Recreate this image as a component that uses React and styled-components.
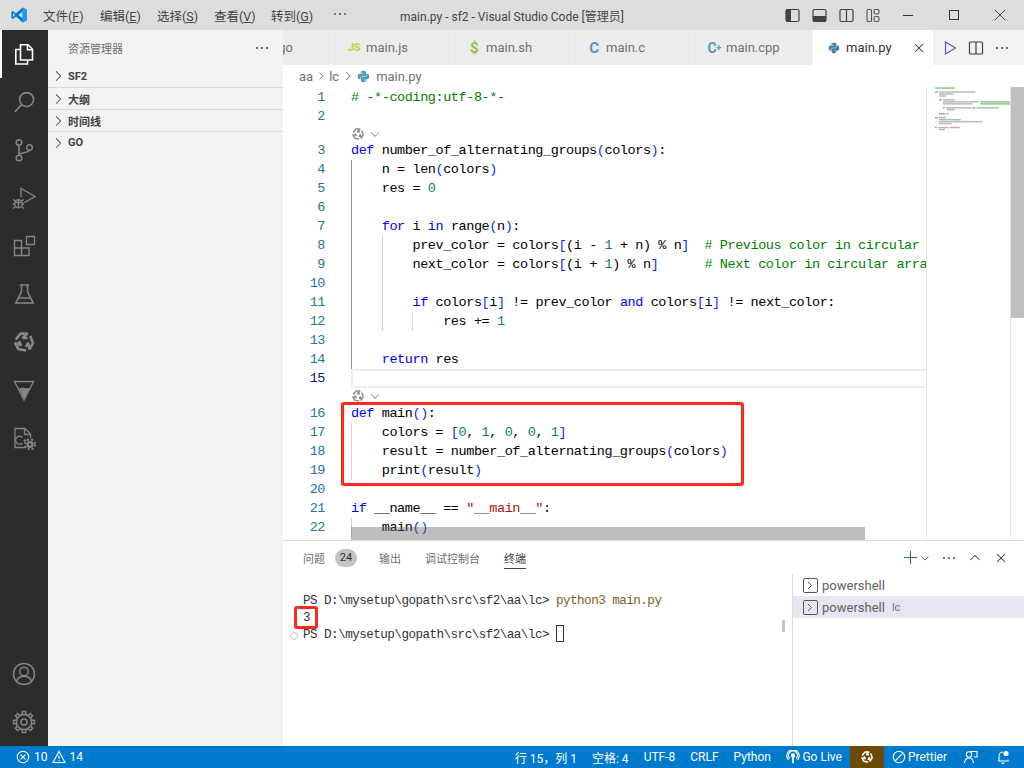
import React from 'react'
import styled, { createGlobalStyle } from 'styled-components'
import { FaPython } from 'react-icons/fa'
import { VscChevronRight, VscChevronDown, VscChevronUp, VscClose, VscEllipsis, VscAdd } from 'react-icons/vsc'

const UI = `Roboto, "Noto Sans CJK SC", sans-serif`
const MONO = `"Liberation Mono", "Noto Sans CJK SC", monospace`

const Global = createGlobalStyle`
  html, body { margin: 0; padding: 0; height: 100%; overflow: hidden; }
  #root { height: 100%; }
  * { box-sizing: border-box; }
`

const Window = styled.div`
  width: 1024px;
  height: 768px;
  display: flex;
  flex-direction: column;
  font-family: ${UI};
  overflow: hidden;
  background: #fff;
`

/* ---------- title bar ---------- */
const TitleBar = styled.div`
  height: 30px;
  flex: none;
  background: #dddddd;
  display: flex;
  align-items: center;
  position: relative;
  color: #333;
  font-size: 12.5px;
`
const Logo = styled.div`
  width: 36px;
  display: flex;
  justify-content: center;
  padding-left: 1px;
`
const Menu = styled.div`
  display: flex;
  margin-left: 7px;
  gap: 16px;
  color: #444;
`
const MenuItem = styled.span`
  white-space: nowrap;
  width: 41px;
  u { text-underline-offset: 1px; }
`
const MenuMore = styled.span`
  margin-left: 4px;
  display: flex;
  color: #555;
`
const Title = styled.div`
  position: absolute;
  left: 0;
  right: 0;
  text-align: center;
  font-size: 12px;
  color: #444;
  pointer-events: none;
`
const TitleRight = styled.div`
  margin-left: auto;
  display: flex;
  align-items: center;
  padding-right: 19px;
`
const LayoutBtn = styled.span`
  display: flex;
  margin-right: 12px;
`
const WinBtn = styled.span`
  display: flex;
  margin-left: ${p => p.$gap}px;
`

/* ---------- body ---------- */
const Body = styled.div`
  flex: 1;
  display: flex;
  min-height: 0;
`
const ActivityBar = styled.div`
  width: 48px;
  flex: none;
  background: #2c2c2c;
  display: flex;
  flex-direction: column;
  color: #858585;
`
const ActivityItem = styled.div`
  height: 48px;
  flex: none;
  display: flex;
  align-items: center;
  justify-content: center;
  color: ${p => (p.$active ? '#fff' : 'inherit')};
  border-left: ${p => (p.$active ? '2px solid #fff' : 'none')};
  padding-right: ${p => (p.$active ? '2px' : '0')};
`
const ActivitySpacer = styled.div`
  flex: 1;
`

const SideBar = styled.div`
  width: 235px;
  flex: none;
  background: #f3f3f3;
  display: flex;
  flex-direction: column;
`
const SideHead = styled.div`
  height: 35px;
  flex: none;
  display: flex;
  align-items: center;
  justify-content: space-between;
  padding: 1px 13px 0 20px;
  font-size: 11px;
  color: #6f6f6f;
`
const SideSection = styled.div`
  height: 22px;
  flex: none;
  display: flex;
  align-items: center;
  color: #424242;
  font-size: 11px;
  font-weight: 700;
  padding-left: 2px;
  gap: 2px;
  border-top: ${p => (p.$first ? 'none' : '1px solid #d9d9d9')};
`

const Main = styled.div`
  flex: 1;
  min-width: 0;
  display: flex;
  flex-direction: column;
`

/* ---------- tabs ---------- */
const TabRow = styled.div`
  height: 35px;
  flex: none;
  display: flex;
  background: #f3f3f3;
`
const TabStrip = styled.div`
  width: 650px;
  display: flex;
  justify-content: flex-end;
  overflow: hidden;
`
const Tab = styled.div`
  width: 120px;
  flex: none;
  display: flex;
  align-items: center;
  padding-left: 15px;
  gap: 6px;
  font-size: 13px;
  background: ${p => (p.$active ? '#fff' : '#ececec')};
  color: ${p => (p.$active ? '#333' : '#717171')};
  border-right: ${p => (p.$active ? 'none' : '1px solid #f3f3f3')};
`
const TabGlyph = styled.span`
  width: 12px;
  font-weight: 700;
  font-size: ${p => p.$size || 13}px;
  color: ${p => p.$color};
  display: flex;
  align-items: center;
  justify-content: center;
  letter-spacing: -0.5px;
  small { font-size: 9px; }
`
const TabClose = styled.span`
  margin-left: auto;
  margin-right: 6px;
  display: flex;
  color: #424242;
`
const TabActions = styled.div`
  flex: 1;
  display: flex;
  align-items: center;
  padding-left: 9px;
  gap: 10px;
  color: #424242;
`

const Crumbs = styled.div`
  height: 22px;
  flex: none;
  display: flex;
  align-items: center;
  padding-left: 16px;
  font-size: 13px;
  color: #717171;
  gap: 2px;
  svg:last-of-type { margin-right: 4px; }
`

/* ---------- editor ---------- */
const Editor = styled.div`
  flex: 1;
  min-height: 0;
  display: flex;
  position: relative;
  overflow: hidden;
`
const Code = styled.div`
  width: 643px;
  flex: none;
  overflow: hidden;
  padding-top: 1px;
  font-family: ${MONO};
  font-size: 13.5px;
  letter-spacing: -0.42px;
  color: #000;
`
const Row = styled.div`
  height: 19px;
  display: flex;
  align-items: center;
  white-space: pre;
  position: relative;
`
const LineNo = styled.span`
  width: 68px;
  flex: none;
  padding-right: 26px;
  text-align: right;
  color: ${p => (p.$active ? '#0b216f' : '#237893')};
`
const guideColor = (i, lit) => (i === 0 && lit ? '#939393' : '#d3d3d3')
const Text = styled.span`
  flex: 1;
  height: 100%;
  line-height: 19px;
  background-image: ${p =>
    Array.from({ length: p.$guides || 0 })
      .map((_, i) => `linear-gradient(${guideColor(i, p.$lit)}, ${guideColor(i, p.$lit)})`)
      .join(',') || 'none'};
  background-size: 1px 100%;
  background-repeat: no-repeat;
  background-position: ${p =>
    Array.from({ length: p.$guides || 0 })
      .map((_, i) => `${i * 30.72}px 0`)
      .join(',') || '0 0'};
`
const ActiveLine = styled.span`
  flex: 1;
  height: 100%;
  border: 2px solid #eeeeee;
  border-right: none;
`
const Lens = styled.div`
  height: ${p => p.$h}px;
  padding-left: 68px;
  display: flex;
  align-items: center;
  gap: 3px;
  color: #919191;
`
const Kw = styled.span`color: #0000ff;`
const Num = styled.span`color: #098658;`
const Str = styled.span`color: #a31515;`
const Cm = styled.span`color: #008000;`
const Br = styled.span`color: #0431fa;`

const Minimap = styled.div`
  width: 84px;
  flex: none;
  border-left: 1px solid #e8e8e8;
  display: flex;
  padding-left: 8px;
  overflow: hidden;
`
const EditorScroll = styled.div`
  flex: 1;
  border-left: 1px solid #e8e8e8;
`
const ScrollThumb = styled.div`
  height: 231px;
  background: #bfbfbf;
`
const HScroll = styled.div`
  position: absolute;
  left: 68px;
  bottom: 0;
  width: 514px;
  height: 13px;
  background: rgba(100, 100, 100, 0.42);
`
const RedBox = styled.div`
  position: absolute;
  border: 3px solid #ff2a1f;
  border-radius: 3px;
  pointer-events: none;
  z-index: 2;
`
const EditorRed = styled(RedBox)`
  left: 58px;
  top: 315px;
  width: 403px;
  height: 84px;
`
const TermRed = styled(RedBox)`
  left: 11px;
  top: 32px;
  width: 24px;
  height: 23px;
`

/* ---------- panel ---------- */
const Panel = styled.div`
  height: 206px;
  flex: none;
  border-top: 1px solid #dcdcdc;
  display: flex;
  flex-direction: column;
`
const PanelHead = styled.div`
  height: 33px;
  flex: none;
  display: flex;
  align-items: center;
  padding-left: 20px;
  font-size: 11px;
  color: #6f6f6f;
`
const PanelTab = styled.span`
  margin-right: ${p => p.$gap}px;
  height: 22px;
  display: flex;
  align-items: center;
  padding-top: 1px;
  color: ${p => (p.$active ? '#424242' : '#6f6f6f')};
  border-bottom: ${p => (p.$active ? '1px solid #424242' : '1px solid transparent')};
`
const Badge = styled.span`
  width: 22px;
  height: 18px;
  border-radius: 9px;
  background: #c4c4c4;
  color: #333;
  display: flex;
  align-items: center;
  justify-content: center;
  margin-left: 10px;
  margin-right: 22px;
`
const PanelActions = styled.div`
  margin-left: auto;
  display: flex;
  align-items: center;
  color: #424242;
  padding-right: 15px;
`
const PanelAction = styled.span`
  display: flex;
  margin-left: ${p => p.$gap}px;
  color: ${p => p.$color || 'inherit'};
`
const PanelBody = styled.div`
  flex: 1;
  display: flex;
  min-height: 0;
`
const Terminal = styled.div`
  width: 509px;
  flex: none;
  position: relative;
  padding: 19px 0 0 20px;
  font-family: ${MONO};
  font-size: 12.6px;
  letter-spacing: -0.53px;
  color: #333;
`
const TermLine = styled.div`
  height: 17px;
  line-height: 17px;
  white-space: pre;
  position: relative;
`
const Cmd = styled.span`color: #795e26;`
const Cursor = styled.span`
  display: inline-block;
  width: 8px;
  height: 17px;
  border: 1px solid #333;
  vertical-align: top;
  position: relative;
  top: -2px;
`
const Deco = styled.span`
  position: absolute;
  left: -13px;
  top: 5px;
  width: 8px;
  height: 8px;
  border: 1px solid #c4c4c4;
  border-radius: 50%;
`
const TermScroll = styled.div`
  position: absolute;
  right: 7px;
  top: 46px;
  width: 3px;
  height: 12px;
  background: #c4c4c4;
`
const TermList = styled.div`
  flex: 1;
  border-left: 1px solid #dcdcdc;
`
const TermItem = styled.div`
  height: 22px;
  display: flex;
  align-items: center;
  padding-left: 10px;
  gap: 4px;
  font-size: 13px;
  color: #616161;
  background: ${p => (p.$selected ? '#e4e6f1' : 'transparent')};
`
const TermFolder = styled.span`
  font-size: 11px;
  margin-left: 3px;
  color: #717171;
`

/* ---------- status bar ---------- */
const StatusBar = styled.div`
  height: 22px;
  flex: none;
  background: #007acc;
  color: #fff;
  display: flex;
  align-items: center;
  font-size: 12px;
`
const StatusLeft = styled.div`
  display: flex;
  align-items: center;
  padding-left: 16px;
  gap: 4px;
`
const StatusRight = styled.div`
  margin-left: auto;
  display: flex;
  align-items: center;
  height: 100%;
  padding-right: 5px;
`
const StatusItem = styled.span`
  display: flex;
  align-items: center;
  gap: 2px;
  height: 100%;
  padding: 0 ${p => p.$pad ?? 7.5}px;
  background: ${p => p.$bg || 'transparent'};
  white-space: nowrap;
`

/* ---------- icons ---------- */
const Svg = ({ s = 24, w, h, vb, children, fill = 'none', sw = 1.4 }) => (
  <svg width={w || s} height={h || s} viewBox={vb || `0 0 ${s} ${s}`} fill={fill} stroke="currentColor" strokeWidth={sw}>
    {children}
  </svg>
)

const VsLogo = () => (
  <svg width="16" height="16" viewBox="0 0 16 16">
    <path d="M11.6 0.6 L15.6 2.4 V13.6 L11.6 15.4 L5 9.6 L2 12 L0.4 11.2 V4.8 L2 4 L5 6.4 Z M11.6 4.8 L7.4 8 L11.6 11.2 Z M2 6 V10 L4 8 Z" fill="#007acc" fillRule="evenodd" />
    <path d="M11.6 0.6 L15.6 2.4 V13.6 L11.6 15.4 Z M11.6 4.8 V11.2 Z" fill="#1f9cf0" />
  </svg>
)
const LayoutIcon = ({ fillRect }) => (
  <svg width="15" height="15" viewBox="0 0 15 15" fill="none" stroke="#424242" strokeWidth="1.2">
    <rect x="1" y="1.5" width="13" height="12" rx="1.5" />
    {fillRect && <rect {...fillRect} fill="#424242" stroke="none" />}
    {!fillRect && <path d="M7.5 1.5 V13.5" />}
  </svg>
)
const CustomizeLayout = () => (
  <svg width="14" height="15" viewBox="0 0 14 15" fill="none" stroke="#555" strokeWidth="1.1">
    <rect x="1" y="1.5" width="4.5" height="12" rx="1" />
    <rect x="8" y="1.5" width="5" height="4.5" rx="1.5" />
    <rect x="8" y="8.5" width="5" height="5" rx="1.5" />
  </svg>
)
const FilesIcon = () => (
  <Svg sw={1.6}>
    <path d="M8.5 2.8 H16 L20.5 7.3 V18 H8.5 Z" />
    <path d="M15.5 3 V7.8 H20.3" />
    <path d="M8.5 7.5 H3.8 V22 H15.5 V18" />
  </Svg>
)
const SearchIcon = () => (
  <Svg sw={1.6}>
    <circle cx="14.6" cy="9.6" r="7" />
    <path d="M9.6 14.6 L2.8 22" />
  </Svg>
)
const ScmIcon = () => (
  <Svg sw={1.5}>
    <circle cx="7" cy="4.5" r="2.8" />
    <circle cx="17.5" cy="9.5" r="2.8" />
    <circle cx="7" cy="20" r="2.8" />
    <path d="M7 7.3 V17.2 M17.5 12.3 C17.5 15 8 14 7 17" />
  </Svg>
)
const DebugIcon = () => (
  <Svg sw={1.4}>
    <path d="M9 11 V2.5 L23 10.5 L12.5 16.5" />
    <ellipse cx="6.5" cy="17.8" rx="3.8" ry="4" />
    <path d="M3 16.5 H10 M6.5 14 V21.8 M1 13.5 L3.5 15 M12 13.5 L9.5 15 M0.8 18 H2.8 M10.2 18 H12.2 M1 22.5 L3.5 20.5 M12 22.5 L9.5 20.5" />
  </Svg>
)
const ExtIcon = () => (
  <Svg sw={1.4}>
    <path d="M2.5 6.5 H9.5 V21.5 H2.5 Z M2.5 14 H17 V21.5 H9.5 M9.5 14 V6.5" />
    <rect x="14.5" y="2.5" width="8" height="8" rx="0.5" />
  </Svg>
)
const FlaskIcon = () => (
  <Svg sw={1.5}>
    <path d="M8 3 H17 M9.5 3 V9.5 L3.8 21 H21.2 L15.5 9.5 V3" />
    <path d="M6.5 16 H18.5" />
  </Svg>
)
// twisted hexagon mark: one band repeated three times around the centre
const HexKnot = ({ size = 24, color = 'currentColor' }) => (
  <svg width={size} height={size} viewBox="0 0 24 24" fill="none" stroke={color} strokeWidth="2.6" strokeLinejoin="bevel">
    {[0, 120, 240].map(a => (
      <path key={a} transform={`rotate(${a} 12 12)`} d="M3.6 9.6 L8.6 3.6 H15.6 L10.6 8 H15.4" />
    ))}
  </svg>
)
const TriIcon = () => (
  <svg width="24" height="24" viewBox="0 0 24 24" fill="none" stroke="currentColor" strokeWidth="1.4">
    <path d="M2.5 3.5 H21.5 L12 22 Z" />
    <path d="M7 10.5 C12 8 14 12 18.5 9.5 L12 21 Z" fill="currentColor" stroke="none" />
  </svg>
)
const CmakeIcon = () => (
  <svg width="24" height="24" viewBox="0 0 24 24" fill="none" stroke="currentColor" strokeWidth="1.3">
    <path d="M14 21.5 H3 V2.5 H13 L18.5 8 V12" />
    <path d="M12.5 2.5 V8.5 H18.5" />
    <path d="M10.5 11.5 A4 4 0 1 0 10.5 17" />
    <path d="M11.5 14.5 H14.5 M13 13 V16" strokeWidth="1" />
    <circle cx="18" cy="18.5" r="3.6" fill="currentColor" stroke="none" />
    <circle cx="18" cy="18.5" r="5" fill="none" strokeDasharray="2 2" strokeWidth="2" />
    <circle cx="18" cy="18.5" r="1.3" fill="#2c2c2c" stroke="none" />
  </svg>
)
const AccountIcon = () => (
  <Svg sw={1.5}>
    <circle cx="12" cy="12" r="10.5" />
    <circle cx="12" cy="9.5" r="4.3" />
    <path d="M4.5 19.5 C5.5 15.5 9 14.2 12 14.2 C15 14.2 18.5 15.5 19.5 19.5" />
  </Svg>
)
const GearIcon = () => {
  const teeth = Array.from({ length: 8 }, (_, i) => i * 45)
  return (
    <svg width="24" height="24" viewBox="0 0 24 24" fill="none" stroke="currentColor" strokeWidth="1.5">
      <circle cx="12" cy="12" r="3" />
      <circle cx="12" cy="12" r="7.6" />
      {teeth.map(a => (
        <path key={a} d="M10 4.8 L10.4 1.5 H13.6 L14 4.8" transform={`rotate(${a} 12 12)`} />
      ))}
    </svg>
  )
}
const TerminalBox = () => (
  <svg width="15" height="15" viewBox="0 0 15 15" fill="none" stroke="#555" strokeWidth="1">
    <rect x="0.5" y="0.5" width="14" height="14" rx="1.5" />
    <path d="M5 4 L8.5 7.5 L5 11" />
  </svg>
)
const PlayIcon = () => (
  <svg width="16" height="16" viewBox="0 0 16 16" fill="none" stroke="#7a4b9e" strokeWidth="1.2">
    <path d="M3.5 2 L13.5 8 L3.5 14 Z" />
  </svg>
)
const SplitIcon = () => (
  <svg width="16" height="16" viewBox="0 0 16 16" fill="none" stroke="#424242" strokeWidth="1.2">
    <rect x="1.5" y="2" width="13" height="12" rx="1" />
    <path d="M8 2 V14" />
  </svg>
)
const ErrorIcon = () => (
  <svg width="14" height="14" viewBox="0 0 14 14" fill="none" stroke="#fff" strokeWidth="1.1">
    <circle cx="7" cy="7" r="5.7" />
    <path d="M4.6 4.6 L9.4 9.4 M9.4 4.6 L4.6 9.4" />
  </svg>
)
const WarnIcon = () => (
  <svg width="14" height="14" viewBox="0 0 14 14" fill="none" stroke="#fff" strokeWidth="1.1">
    <path d="M7 1.5 L13 12.5 H1 Z" />
    <path d="M7 5.5 V9 M7 10 V11" />
  </svg>
)
const LiveIcon = () => (
  <svg width="14" height="14" viewBox="0 0 14 14" fill="none" stroke="#fff" strokeWidth="1.2">
    <circle cx="7" cy="5.5" r="1.6" fill="#fff" />
    <path d="M3.8 8.5 A4.4 4.4 0 1 1 10.2 8.5 M2.4 10 A6.2 6.2 0 1 1 11.6 10" />
    <path d="M7 7.5 V13" strokeWidth="2" />
  </svg>
)
const BanIcon = () => (
  <svg width="14" height="14" viewBox="0 0 14 14" fill="none" stroke="#fff" strokeWidth="1.1">
    <circle cx="7" cy="7" r="5.7" />
    <path d="M3 11 L11 3" />
  </svg>
)
const FeedbackIcon = () => (
  <svg width="16" height="16" viewBox="0 0 16 16" fill="none" stroke="#fff" strokeWidth="1.1">
    <circle cx="6" cy="5.5" r="2.7" />
    <path d="M1.5 14 C2 10.5 4 9 6 9 C8 9 10 10.5 10.5 14" />
    <path d="M7 2.5 H14 V8 L11 8" />
  </svg>
)
const BellIcon = () => (
  <svg width="16" height="16" viewBox="0 0 16 16" fill="none" stroke="#fff" strokeWidth="1.1">
    <path d="M4 11.5 V7 A4 4 0 0 1 8 3 M3 12 H13 V10.5 M6.5 13.5 A1.6 1.6 0 0 0 9.5 13.5" />
    <circle cx="11" cy="4.5" r="2.6" fill="#fff" stroke="none" />
  </svg>
)

// one pixel per character, two pixels per line: [line, column, chars, kind]
const miniColors = { k: '#7f7ff5', t: '#a8a8a8', c: '#6fb96f', s: '#d08a8a' }
const miniRows = [
  [1, 0, 20, 'c'],
  [3, 0, 3, 'k'], [3, 4, 37, 't'],
  [4, 4, 15, 't'], [5, 4, 7, 't'],
  [7, 4, 3, 'k'], [7, 8, 12, 't'],
  [8, 8, 36, 't'], [8, 46, 30, 'c'],
  [9, 8, 30, 't'], [9, 46, 30, 'c'],
  [11, 8, 2, 'k'], [11, 11, 26, 't'], [11, 38, 3, 'k'], [11, 42, 23, 't'],
  [12, 12, 8, 't'],
  [14, 4, 6, 'k'], [14, 11, 3, 't'],
  [16, 0, 3, 'k'], [16, 4, 7, 't'],
  [17, 4, 22, 't'], [18, 4, 44, 't'], [19, 4, 13, 't'],
  [21, 0, 2, 'k'], [21, 3, 11, 't'], [21, 15, 10, 's'],
  [22, 4, 6, 't'],
]
const MinimapDrawing = () => (
  <svg width="76" height="50" viewBox="0 0 76 50">
    {miniRows.map(([line, x, w, kind], i) => (
      <rect key={i} x={x} y={(line - 1) * 2} width={w} height="1.5" fill={miniColors[kind]} opacity="0.8" />
    ))}
  </svg>
)

const chevron = <VscChevronRight size={16} color="#424242" />

const code = [
  { n: 1, t: <Cm># -*-coding:utf-8-*-</Cm> },
  { n: 2, t: '' },
  { lens: 15 },
  { n: 3, t: <><Kw>def</Kw> number_of_alternating_groups<Br>(</Br>colors<Br>)</Br>:</> },
  { n: 4, g: 1, lit: true, t: <>    n = len<Br>(</Br>colors<Br>)</Br></> },
  { n: 5, g: 1, lit: true, t: <>    res = <Num>0</Num></> },
  { n: 6, g: 1, lit: true, t: '' },
  { n: 7, g: 1, lit: true, t: <>    <Kw>for</Kw> i <Kw>in</Kw> range<Br>(</Br>n<Br>)</Br>:</> },
  { n: 8, g: 2, lit: true, t: <>        prev_color = colors<Br>[</Br>(i - <Num>1</Num> + n) % n<Br>]</Br>  <Cm># Previous color in circular array</Cm></> },
  { n: 9, g: 2, lit: true, t: <>        next_color = colors<Br>[</Br>(i + <Num>1</Num>) % n<Br>]</Br>      <Cm># Next color in circular array</Cm></> },
  { n: 10, g: 2, lit: true, t: '' },
  { n: 11, g: 2, lit: true, t: <>        <Kw>if</Kw> colors<Br>[</Br>i<Br>]</Br> != prev_color <Kw>and</Kw> colors<Br>[</Br>i<Br>]</Br> != next_color:</> },
  { n: 12, g: 3, lit: true, t: <>            res += <Num>1</Num></> },
  { n: 13, g: 1, lit: true, t: '' },
  { n: 14, g: 1, lit: true, t: <>    <Kw>return</Kw> res</> },
  { n: 15, active: true },
  { lens: 16 },
  { n: 16, t: <><Kw>def</Kw> main<Br>()</Br>:</> },
  { n: 17, g: 1, t: <>    colors = <Br>[</Br><Num>0</Num>, <Num>1</Num>, <Num>0</Num>, <Num>0</Num>, <Num>1</Num><Br>]</Br></> },
  { n: 18, g: 1, t: <>    result = number_of_alternating_groups<Br>(</Br>colors<Br>)</Br></> },
  { n: 19, g: 1, t: <>    print<Br>(</Br>result<Br>)</Br></> },
  { n: 20, t: '' },
  { n: 21, t: <><Kw>if</Kw> __name__ == <Str>"__main__"</Str>:</> },
  { n: 22, g: 1, t: <>    main<Br>()</Br></> },
]

const tabs = [
  { name: 'main.go', glyph: <TabGlyph $color="#519aba">G</TabGlyph> },
  { name: 'main.js', glyph: <TabGlyph $color="#cbcb41" $size={11}>JS</TabGlyph> },
  { name: 'main.sh', glyph: <TabGlyph $color="#8dc149" $size={15}>$</TabGlyph> },
  { name: 'main.c', glyph: <TabGlyph $color="#519aba" $size={15}>C</TabGlyph> },
  { name: 'main.cpp', glyph: <TabGlyph $color="#519aba" $size={14}>C<small>+</small></TabGlyph> },
]

const menus = [['文件', 'F'], ['编辑', 'E'], ['选择', 'S'], ['查看', 'V'], ['转到', 'G']]
const activity = [FilesIcon, SearchIcon, ScmIcon, DebugIcon, ExtIcon, FlaskIcon, HexKnot, TriIcon, CmakeIcon]

export default function App() {
  return (
    <Window>
      <Global />
      <TitleBar>
        <Logo><VsLogo /></Logo>
        <Menu>
          {menus.map(([label, key]) => (
            <MenuItem key={key}>{label}(<u>{key}</u>)</MenuItem>
          ))}
          <MenuMore><VscEllipsis size={16} /></MenuMore>
        </Menu>
        <Title>main.py - sf2 - Visual Studio Code [管理员]</Title>
        <TitleRight>
          <LayoutBtn><LayoutIcon fillRect={{ x: 1, y: 1.5, width: 5, height: 12 }} /></LayoutBtn>
          <LayoutBtn><LayoutIcon fillRect={{ x: 1, y: 8, width: 13, height: 5.5 }} /></LayoutBtn>
          <LayoutBtn><LayoutIcon /></LayoutBtn>
          <LayoutBtn><CustomizeLayout /></LayoutBtn>
          <WinBtn $gap={11}>
            <svg width="10" height="10" viewBox="0 0 10 10" stroke="#333"><path d="M0 5.5 H10" /></svg>
          </WinBtn>
          <WinBtn $gap={36}>
            <svg width="10" height="10" viewBox="0 0 10 10" fill="none" stroke="#333"><rect x="0.5" y="0.5" width="9" height="9" /></svg>
          </WinBtn>
          <WinBtn $gap={36}>
            <svg width="10" height="10" viewBox="0 0 10 10" stroke="#333" strokeWidth="0.9"><path d="M0 0 L10 10 M10 0 L0 10" /></svg>
          </WinBtn>
        </TitleRight>
      </TitleBar>

      <Body>
        <ActivityBar>
          {activity.map((Icon, i) => (
            <ActivityItem key={i} $active={i === 0}><Icon /></ActivityItem>
          ))}
          <ActivitySpacer />
          <ActivityItem><AccountIcon /></ActivityItem>
          <ActivityItem><GearIcon /></ActivityItem>
        </ActivityBar>

        <SideBar>
          <SideHead>
            <span>资源管理器</span>
            <VscEllipsis size={16} color="#424242" />
          </SideHead>
          <SideSection $first>{chevron}SF2</SideSection>
          <SideSection>{chevron}大纲</SideSection>
          <SideSection>{chevron}时间线</SideSection>
          <SideSection>{chevron}GO</SideSection>
        </SideBar>

        <Main>
          <TabRow>
            <TabStrip>
              {tabs.map(t => (
                <Tab key={t.name}>{t.glyph}{t.name}</Tab>
              ))}
              <Tab $active>
                <FaPython size={12} color="#3b82ab" />
                main.py
                <TabClose><VscClose size={16} /></TabClose>
              </Tab>
            </TabStrip>
            <TabActions>
              <PlayIcon />
              <SplitIcon />
              <VscEllipsis size={16} />
            </TabActions>
          </TabRow>
          <Crumbs>
            aa <VscChevronRight size={12} /> lc <VscChevronRight size={14} />
            <FaPython size={13} color="#519aba" /> main.py
          </Crumbs>

          <Editor>
            <Code>
              {code.map((l, i) =>
                l.lens ? (
                  <Lens key={i} $h={l.lens}>
                    <HexKnot size={14} color="#919191" />
                    <VscChevronDown size={14} />
                  </Lens>
                ) : (
                  <Row key={i}>
                    <LineNo $active={l.active}>{l.n}</LineNo>
                    {l.active ? <ActiveLine /> : <Text $guides={l.g} $lit={l.lit}>{l.t}</Text>}
                  </Row>
                )
              )}
            </Code>
            <Minimap><MinimapDrawing /></Minimap>
            <EditorScroll><ScrollThumb /></EditorScroll>
            <HScroll />
            <EditorRed />
          </Editor>

          <Panel>
            <PanelHead>
              <PanelTab>问题</PanelTab>
              <Badge>24</Badge>
              <PanelTab $gap={24}>输出</PanelTab>
              <PanelTab $gap={24}>调试控制台</PanelTab>
              <PanelTab $active>终端</PanelTab>
              <PanelActions>
                <PanelAction $color="#2b7a2b"><VscAdd size={16} /></PanelAction>
                <PanelAction $gap={0}><VscChevronDown size={12} /></PanelAction>
                <PanelAction $gap={10}><VscEllipsis size={16} /></PanelAction>
                <PanelAction $gap={10}><VscChevronUp size={16} /></PanelAction>
                <PanelAction $gap={10}><VscClose size={16} /></PanelAction>
              </PanelActions>
            </PanelHead>
            <PanelBody>
              <Terminal>
                <TermLine>PS D:\mysetup\gopath\src\sf2\aa\lc&gt; <Cmd>python3 main.py</Cmd></TermLine>
                <TermLine>3</TermLine>
                <TermLine><Deco />PS D:\mysetup\gopath\src\sf2\aa\lc&gt; <Cursor /></TermLine>
                <TermRed />
                <TermScroll />
              </Terminal>
              <TermList>
                <TermItem><TerminalBox />powershell</TermItem>
                <TermItem $selected><TerminalBox />powershell<TermFolder>lc</TermFolder></TermItem>
              </TermList>
            </PanelBody>
          </Panel>
        </Main>
      </Body>

      <StatusBar>
        <StatusLeft>
          <ErrorIcon />10
          <WarnIcon />14
        </StatusLeft>
        <StatusRight>
          <StatusItem>行 15，列 1</StatusItem>
          <StatusItem>空格: 4</StatusItem>
          <StatusItem>UTF-8</StatusItem>
          <StatusItem>CRLF</StatusItem>
          <StatusItem>Python</StatusItem>
          <StatusItem $pad={8}><LiveIcon />Go Live</StatusItem>
          <StatusItem $bg="#6b4a00" $pad={10}><HexKnot size={14} color="#fff" /></StatusItem>
          <StatusItem $pad={8}><BanIcon />Prettier</StatusItem>
          <StatusItem $pad={8}><FeedbackIcon /></StatusItem>
          <StatusItem $pad={8}><BellIcon /></StatusItem>
        </StatusRight>
      </StatusBar>
    </Window>
  )
}
